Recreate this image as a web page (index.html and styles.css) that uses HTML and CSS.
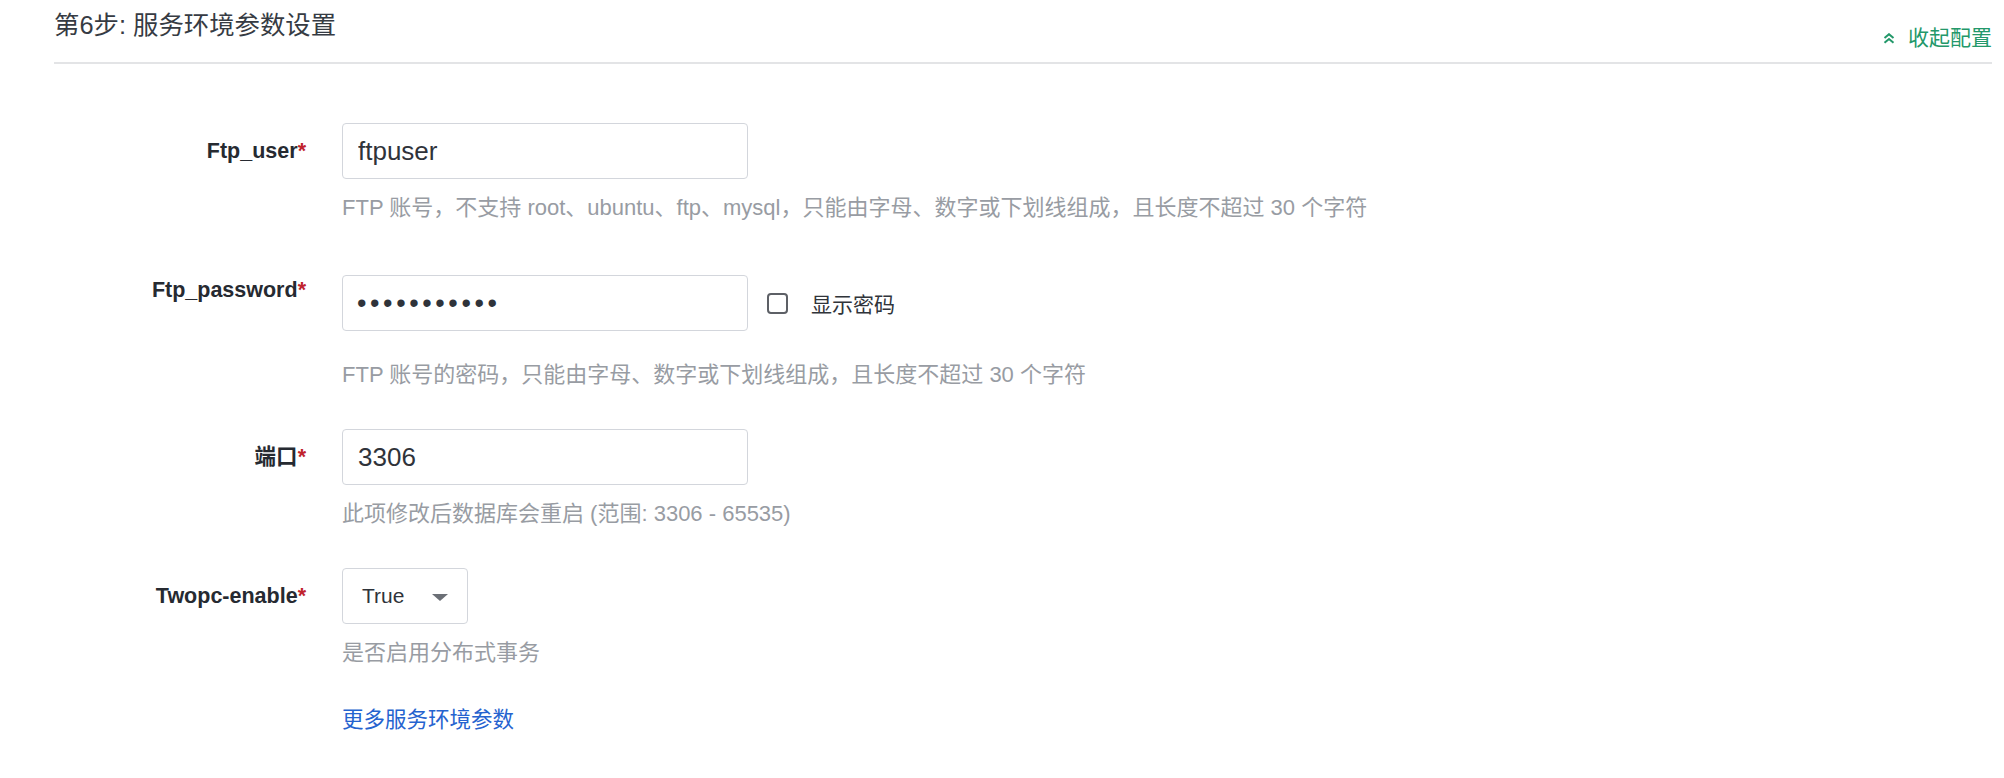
FILE: index.html
```html
<!DOCTYPE html>
<html lang="zh-CN">
<head>
<meta charset="utf-8">
<title>第6步: 服务环境参数设置</title>
<link rel="stylesheet" href="styles.css">
</head>
<body>
<div class="page">
  <div class="section-head">
    <h2 class="section-title">第6步: 服务环境参数设置</h2>
    <a class="collapse-link" href="#">
      <svg class="collapse-icon" width="12" height="11" viewBox="0 0 12 11"><path d="M1.5 5 L6 1.2 L10.5 5 M1.5 9.8 L6 6 L10.5 9.8" fill="none" stroke="currentColor" stroke-width="2"/></svg>
      <span>收起配置</span>
    </a>
  </div>

  <form class="form">
    <div class="row row-first">
      <label class="row-label">Ftp_user<span class="req">*</span></label>
      <div class="row-body">
        <input class="text-input" type="text" value="ftpuser">
        <p class="help">FTP 账号，不支持 root、ubuntu、ftp、mysql，只能由字母、数字或下划线组成，且长度不超过 30 个字符</p>
      </div>
    </div>

    <div class="row">
      <label class="row-label row-label-top">Ftp_password<span class="req">*</span></label>
      <div class="row-body">
        <div class="inline">
          <input class="text-input password" type="password" value="abcdefghijk">
          <label class="check">
            <input class="check-box" type="checkbox">
            <span>显示密码</span>
          </label>
        </div>
        <p class="help help-far">FTP 账号的密码，只能由字母、数字或下划线组成，且长度不超过 30 个字符</p>
      </div>
    </div>

    <div class="row">
      <label class="row-label">端口<span class="req">*</span></label>
      <div class="row-body">
        <input class="text-input" type="text" value="3306">
        <p class="help">此项修改后数据库会重启 (范围: 3306 - 65535)</p>
      </div>
    </div>

    <div class="row">
      <label class="row-label">Twopc-enable<span class="req">*</span></label>
      <div class="row-body">
        <div class="select">
          <span class="select-value">True</span>
          <span class="caret"></span>
        </div>
        <p class="help">是否启用分布式事务</p>
      </div>
    </div>

    <div class="row row-link">
      <span class="row-label"></span>
      <div class="row-body">
        <a class="more-link" href="#">更多服务环境参数</a>
      </div>
    </div>
  </form>
</div>
</body>
</html>
```

FILE: styles.css
```css
* {
  box-sizing: border-box;
}

html, body {
  margin: 0;
  padding: 0;
  background: #ffffff;
}

body {
  font-family: "Liberation Sans", "Noto Sans CJK SC", sans-serif;
  color: #333840;
}

.page {
  padding: 0 12px 0 54px;
}

.section-head {
  display: flex;
  justify-content: space-between;
  align-items: flex-start;
  height: 64px;
  border-bottom: 2px solid #e3e4e6;
}

.section-title {
  margin: 8px 0 0;
  font-size: 25.4px;
  font-weight: 400;
  line-height: 34px;
  color: #363b43;
}

.collapse-link {
  display: flex;
  align-items: center;
  gap: 13px;
  margin-top: 23px;
  font-size: 21px;
  line-height: 30px;
  color: #23986a;
  text-decoration: none;
}

.collapse-icon {
  display: block;
}

.form {
  padding-top: 59px;
}

.row {
  display: grid;
  grid-template-columns: 252px 1fr;
  column-gap: 36px;
  margin-bottom: 39px;
}

.row-first {
  margin-bottom: 52px;
}

.row-label {
  display: block;
  text-align: right;
  font-size: 21.5px;
  font-weight: 700;
  line-height: 56px;
  color: #262a31;
}

.row-label-top {
  line-height: 24px;
  padding-top: 3px;
}

.req {
  color: #c0232c;
}

.row-body {
  display: flex;
  flex-direction: column;
  align-items: flex-start;
}

.text-input {
  width: 406px;
  height: 56px;
  padding: 0 15px;
  border: 1px solid #d3d6dc;
  border-radius: 4px;
  font-family: "Liberation Sans", "Noto Sans CJK SC", sans-serif;
  font-size: 26px;
  color: #2f333a;
  background: #fff;
  outline: none;
}

.password {
  letter-spacing: 3.6px;
  font-size: 27px;
  padding-left: 14px;
}

.inline {
  display: flex;
  align-items: center;
}

.check {
  display: flex;
  align-items: center;
  gap: 23px;
  margin-left: 19px;
  font-size: 21px;
  color: #30343a;
}

.check-box {
  appearance: none;
  -webkit-appearance: none;
  width: 21px;
  height: 21px;
  margin: 0;
  border: 2px solid #5d6066;
  border-radius: 4px;
  background: #fff;
}

.help {
  margin: 14px 0 0;
  font-size: 22px;
  line-height: 30px;
  color: #989ca3;
}

.help-far {
  margin-top: 29px;
}

.select {
  display: flex;
  align-items: center;
  justify-content: space-between;
  width: 126px;
  height: 56px;
  padding: 0 19px;
  border: 1px solid #d3d6dc;
  border-radius: 4px;
  background: #fff;
}

.select-value {
  font-size: 21px;
  color: #2f333a;
}

.caret {
  width: 0;
  height: 0;
  border-left: 8px solid transparent;
  border-right: 8px solid transparent;
  border-top: 7px solid #6b6f76;
  margin-top: 2px;
}

.row-link {
  margin-top: -2px;
}

.more-link {
  font-size: 21.5px;
  line-height: 30px;
  color: #2563cf;
  text-decoration: none;
}
```
